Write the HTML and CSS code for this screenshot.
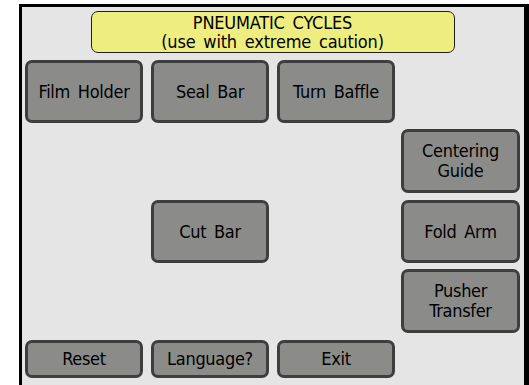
FILE: index.html
```html
<!DOCTYPE html>
<html>
<head>
<meta charset="utf-8">
<link rel="stylesheet" href="styles.css">
</head>
<body>
<div class="frame">
  <div class="title">PNEUMATIC CYCLES<br>(use with extreme caution)</div>
  <div class="grid">
    <div class="btn c1 r1">Film Holder</div>
    <div class="btn c2 r1">Seal Bar</div>
    <div class="btn c3 r1">Turn Baffle</div>
    <div class="btn c4 r2">Centering<br>Guide</div>
    <div class="btn c2 r3">Cut Bar</div>
    <div class="btn c4 r3">Fold Arm</div>
    <div class="btn c4 r4">Pusher<br>Transfer</div>
    <div class="btn c1 r5">Reset</div>
    <div class="btn c2 r5">Language?</div>
    <div class="btn c3 r5">Exit</div>
  </div>
</div>
</body>
</html>
```
FILE: styles.css
```css
html, body {
  margin: 0;
  padding: 0;
  background: #ffffff;
}
body {
  width: 529px;
  height: 385px;
  overflow: hidden;
  font-family: "DejaVu Sans", "Liberation Sans", sans-serif;
  font-stretch: condensed;
}
.frame {
  margin: 4px 0 0 19px;
  height: 381px;
  box-sizing: border-box;
  background: #e5e5e5;
  border-top: 3px solid #000;
  border-left: 3px solid #000;
  border-right: 5px solid #000;
  padding: 4px 4px 0 3px;
  display: flex;
  flex-direction: column;
}
.title {
  align-self: center;
  width: 364px;
  height: 42px;
  box-sizing: border-box;
  background: #eeee80;
  border: 1px solid #1e1e1e;
  border-radius: 7px;
  text-align: center;
  font-size: 18px;
  line-height: 19px;
  word-spacing: 3px;
  letter-spacing: -0.2px;
  padding-top: 1px;
  color: #000;
}
.grid {
  margin-top: 7px;
  display: grid;
  grid-template-columns: 118px 8px 118px 8px 118px 6px 119px;
  grid-template-rows: 63px 6px 64px 7px 63px 6px 64px 7px 38px;
}
.btn {
  box-sizing: border-box;
  background: #8b8c89;
  border: 3px solid #3e3e3e;
  border-radius: 7px;
  display: flex;
  align-items: center;
  justify-content: center;
  text-align: center;
  font-size: 18px;
  line-height: 20px;
  letter-spacing: -0.3px;
  word-spacing: 3px;
  color: #000;
}
.c1 { grid-column: 1; }
.c2 { grid-column: 3; }
.c3 { grid-column: 5; }
.c4 { grid-column: 7; }
.r1 { grid-row: 1; }
.r2 { grid-row: 3; }
.r3 { grid-row: 5; }
.r4 { grid-row: 7; }
.r5 { grid-row: 9; }
```
